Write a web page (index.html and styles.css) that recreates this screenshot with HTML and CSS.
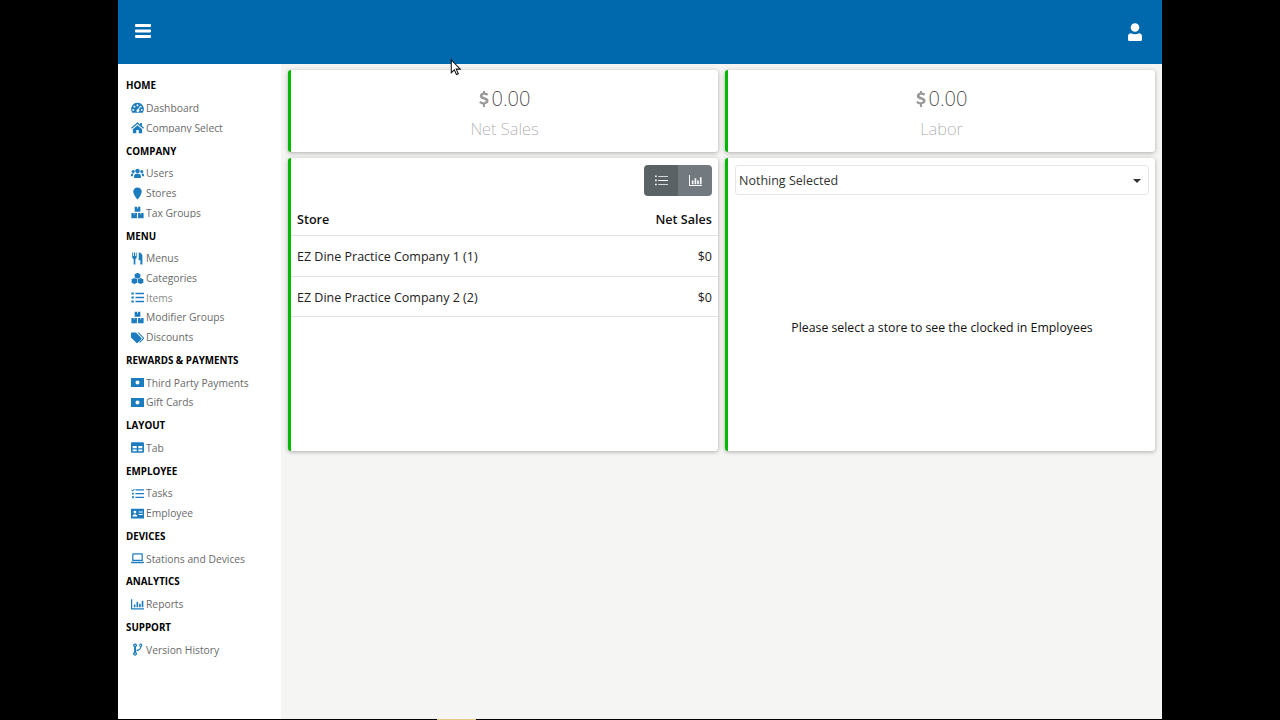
FILE: index.html
```html
<!DOCTYPE html>
<html lang="en">
<head>
<meta charset="utf-8">
<title>Dashboard</title>
<link rel="stylesheet" href="styles.css">
</head>
<body>
<div class="app">
  <header class="topbar">
    <svg class="burger" viewBox="0 0 16 14"><path d="M1 0h14a1 1 0 0 1 1 1v1a1 1 0 0 1-1 1H1a1 1 0 0 1-1-1V1a1 1 0 0 1 1-1zM1 5.500h14a1 1 0 0 1 1 1v1a1 1 0 0 1-1 1H1a1 1 0 0 1-1-1v-1a1 1 0 0 1 1-1zM1 11h14a1 1 0 0 1 1 1v1a1 1 0 0 1-1 1H1a1 1 0 0 1-1-1v-1a1 1 0 0 1 1-1z"/></svg>
    <svg class="user" viewBox="0 0 14 18"><circle cx="7" cy="4.500" r="4.300"/><path d="M3 10.200c1.200.6 2.600 1 4 1s2.800-.4 4-1c1.800 0 3 1.400 3 3V16.500a1.500 1.500 0 0 1-1.500 1.500h-11A1.500 1.500 0 0 1 0 16.500v-3.300c0-1.600 1.200-3 3-3z"/></svg>
  </header>
  <div class="body">
    <nav class="sidebar">
      <section class="group">
        <h2>HOME</h2>
        <a class="item"><svg viewBox="0 0 16 16"><path fill-rule="evenodd" d="M8 1a7.700 7.700 0 0 1 6.800 11.500c-.2.500-.7.800-1.200.8H2.400c-.5 0-1-.3-1.200-.8A7.700 7.700 0 0 1 8 1zM8 2.800a1.200 1.200 0 1 0 0 2.400 1.200 1.200 0 0 0 0-2.400zM4.200 4.500a1.200 1.200 0 1 0 0 2.400 1.200 1.200 0 0 0 0-2.400zm7.600 0a1.200 1.200 0 1 0 0 2.400 1.200 1.200 0 0 0 0-2.400zM2.800 8.500a1.200 1.200 0 1 0 0 2.400 1.200 1.200 0 0 0 0-2.400zm10.400 0a1.200 1.200 0 1 0 0 2.400 1.200 1.200 0 0 0 0-2.400zM10.500 5.500L8.600 9a1.700 1.700 0 1 0 1 .4l2-3.400z"/></svg>Dashboard</a>
        <a class="item clip"><svg viewBox="0 0 16 16"><path d="M8 1.500L0 8.400l1 1.100L8 3.600l7 5.900 1-1.100-2.500-2.200V2.500h-2.200v1.900zM2.300 10.100V15h4.200v-3.800h3V15h4.200v-4.900L8 5.300z"/></svg><span>Company Select</span></a>
      </section>
      <section class="group">
        <h2>COMPANY</h2>
        <a class="item"><svg viewBox="0 0 16 16"><circle cx="8" cy="5" r="2.800"/><circle cx="2.700" cy="5.500" r="1.900"/><circle cx="13.300" cy="5.500" r="1.900"/><path d="M3.800 13.500v-2C3.800 9.500 5.300 8.300 6.500 8.300h3c1.200 0 2.700 1.200 2.700 3.200v2zM0 11.500V9.700c0-1 .7-1.800 1.700-1.800h1.700c-.7.800-1.100 1.900-1.200 3.600zM16 11.500V9.700c0-1-.7-1.800-1.700-1.800h-1.700c.7.800 1.100 1.900 1.200 3.600z"/></svg>Users</a>
        <a class="item"><svg viewBox="0 0 16 16"><path d="M8 .5c3.100 0 5.200 2.200 5.200 5.100C13.200 8.600 10 13.400 8 15.500 6 13.400 2.800 8.600 2.800 5.600 2.800 2.700 4.900.5 8 .5z"/></svg>Stores</a>
        <a class="item clip"><svg viewBox="0 0 16 16"><path fill-rule="evenodd" d="M4.500 1h3v2h1V1h3v6h-7zM.5 8.500h3v2h.8v-2h3V15H.500zM8.700 8.500h3v2h.8v-2h3V15H8.700z"/></svg><span>Tax Groups</span></a>
      </section>
      <section class="group">
        <h2>MENU</h2>
        <a class="item"><svg viewBox="0 0 16 16"><path d="M1.500 .5h1.200v4.500h1V.5h1.200v4.500h1V.5h1.100v6c0 1-.7 1.700-1.600 2V15.500H3.300v-7c-1-.3-1.800-1-1.800-2zM9.500.5c3 0 4.500 2 4.500 5v10h-2.500V10H9.500z"/></svg>Menus</a>
        <a class="item"><svg viewBox="0 0 16 16"><path d="M8 1l3.500 1.700v4L8 8.400 4.500 6.700v-4zM4.200 7.300l3.400 1.700v4.200l-3.400 1.700L.8 13.200V9zM11.800 7.300l3.400 1.700v4.200l-3.400 1.700-3.400-1.700V9z"/></svg>Categories</a>
        <a class="item dim"><svg viewBox="0 0 16 16"><path d="M.5 1.800h3v2.600h-3zM.5 6.700h3v2.600h-3zM.5 11.600h3v2.600h-3zM5.500 2.300H16V4H5.500zM5.500 7.200H16v1.700H5.500zM5.500 12.100H16v1.700H5.500z"/></svg>Items</a>
        <a class="item"><svg viewBox="0 0 16 16"><path fill-rule="evenodd" d="M4.500 1h3v2h1V1h3v6h-7zM.5 8.500h3v2h.8v-2h3V15H.500zM8.700 8.500h3v2h.8v-2h3V15H8.700z"/></svg>Modifier Groups</a>
        <a class="item clip"><svg viewBox="0 0 16 16"><path d="M0 2.700v5.200l6.500 6.500c.6.600 1.300.6 1.900 0l4.200-4.200c.6-.6.600-1.300 0-1.900L6.100 1.800H.9C.4 1.800 0 2.200 0 2.700z"/><path d="M8 1.800h1.800l5.800 6.100c.6.600.6 1.300 0 1.900l-4.500 4.600-.9-.8 4.100-4.300c.3-.3.300-.7 0-1z"/></svg><span>Discounts</span></a>
      </section>
      <section class="group">
        <h2>REWARDS &amp; PAYMENTS</h2>
        <a class="item"><svg viewBox="0 0 16 16"><path fill-rule="evenodd" d="M0 2.500h16v11H0zM8 5.500a2.500 2.500 0 1 0 0 5 2.500 2.500 0 0 0 0-5z"/></svg>Third Party Payments</a>
        <a class="item"><svg viewBox="0 0 16 16"><path fill-rule="evenodd" d="M0 2.500h16v11H0zM8 5.500a2.500 2.500 0 1 0 0 5 2.500 2.500 0 0 0 0-5z"/></svg>Gift Cards</a>
      </section>
      <section class="group">
        <h2>LAYOUT</h2>
        <a class="item"><svg viewBox="0 0 16 16"><path fill-rule="evenodd" d="M1.500 1.500h13A1.500 1.500 0 0 1 16 3v10a1.500 1.500 0 0 1-1.500 1.500h-13A1.500 1.500 0 0 1 0 13V3a1.500 1.500 0 0 1 1.500-1.500zM2 6v3h5V6zm7 0v3h5V6zm-7 4.500v2.200h5v-2.200zm7 0v2.200h5v-2.200z"/></svg>Tab</a>
      </section>
      <section class="group">
        <h2>EMPLOYEE</h2>
        <a class="item"><svg viewBox="0 0 16 16"><path d="M1 3l1 1 2-2 .7.700L2 5.500.3 3.700zM1.200 7h2.300v2.300H1.200zM1.200 11.500h2.300v2.300H1.200zM5.500 2.800H16v1.600H5.500zM5.500 7.400H16V9H5.500zM5.500 12H16v1.600H5.500z"/></svg>Tasks</a>
        <a class="item"><svg viewBox="0 0 16 16"><path fill-rule="evenodd" d="M0 2h16v12H0zM4.800 4.500a1.800 1.800 0 1 0 0 3.600 1.800 1.800 0 0 0 0-3.600zM1.800 11.800h6c0-1.700-1.100-2.900-3-2.900s-3 1.200-3 2.900zM9.500 5.500v1.300H14.500V5.500zm0 3v1.300H14.500V8.500z"/></svg>Employee</a>
      </section>
      <section class="group">
        <h2>DEVICES</h2>
        <a class="item clip"><svg viewBox="0 0 16 16"><path fill-rule="evenodd" d="M2.500 1.500h11c.6 0 1 .4 1 1V11h-13V2.500c0-.6.400-1 1-1zM3 3v6.500h10V3zM0 12h16v.8c0 .6-.4 1-1 1H1c-.6 0-1-.4-1-1z"/></svg><span>Stations and Devices</span></a>
      </section>
      <section class="group">
        <h2>ANALYTICS</h2>
        <a class="item"><svg viewBox="0 0 16 16"><path d="M0 1.500h1.500v11H16V14H0zM3.500 8h2v3.500h-2zM6.800 5h2v6.500h-2zM10 7h2v4.500h-2zM13.200 3.500h2v8h-2z"/></svg>Reports</a>
      </section>
      <section class="group">
        <h2>SUPPORT</h2>
        <a class="item"><svg viewBox="0 0 16 16"><path fill-rule="evenodd" d="M5 .5a2.300 2.300 0 0 1 1.200 4.300v6.400a2.300 2.300 0 1 1-2.400 0V4.800A2.300 2.300 0 0 1 5 .5zm0 1.500a.8.800 0 1 0 0 1.600.8.800 0 0 0 0-1.600zm0 10.500a.8.800 0 1 0 0 1.600.8.800 0 0 0 0-1.600zM11.500.5a2.300 2.300 0 0 1 1.200 4.300c0 3-2.700 4.300-5.900 5.300V8.400c2.500-.7 4.300-1.400 4.600-3.600a2.300 2.300 0 0 1 .1-4.300zm0 1.500a.8.800 0 1 0 0 1.600.8.800 0 0 0 0-1.600z"/></svg>Version History</a>
      </section>
    </nav>
    <main class="content">
      <article class="card kpi">
        <div class="kpi-value"><svg class="dollar" viewBox="0 0 10 18"><path d="M6 1v1.500c1.300.1 2.400.6 3.300 1.300L8 5.700C7.200 5.100 6.200 4.800 5.200 4.800c-1 0-1.600.4-1.600 1 0 .7.800 1 2.100 1.400 2 .6 3.900 1.300 3.900 3.500 0 1.800-1.400 3-3.600 3.300V17H4v-2.500c-1.500-.2-2.900-.8-3.900-1.700l1.500-1.900c1 .8 2.200 1.300 3.400 1.300 1.100 0 1.800-.4 1.800-1.100S6 9.900 4.600 9.500C2.500 8.900.8 8.200.8 6c0-1.800 1.300-3.100 3.200-3.500V1z"/></svg><span>0.00</span></div>
        <div class="kpi-label">Net Sales</div>
      </article>
      <article class="card kpi">
        <div class="kpi-value"><svg class="dollar" viewBox="0 0 10 18"><path d="M6 1v1.500c1.300.1 2.400.6 3.300 1.300L8 5.700C7.200 5.100 6.200 4.800 5.200 4.800c-1 0-1.600.4-1.600 1 0 .7.800 1 2.100 1.400 2 .6 3.900 1.300 3.900 3.500 0 1.800-1.400 3-3.600 3.300V17H4v-2.500c-1.500-.2-2.900-.8-3.900-1.700l1.500-1.900c1 .8 2.200 1.300 3.400 1.300 1.100 0 1.800-.4 1.800-1.100S6 9.900 4.600 9.500C2.500 8.900.8 8.200.8 6c0-1.800 1.300-3.100 3.200-3.500V1z"/></svg><span>0.00</span></div>
        <div class="kpi-label">Labor</div>
      </article>
      <article class="card stores">
        <div class="toolbar">
          <div class="btn-group">
            <button class="btn active"><svg viewBox="0 0 14 12"><path d="M0 .5h1.800v1.800H0zM0 5h1.800v1.800H0zM0 9.500h1.800v1.800H0zM3.500 1H14v1H3.500zM3.500 5.500H14v1H3.500zM3.500 10H14v1H3.500z"/></svg></button>
            <button class="btn"><svg viewBox="0 0 14 12"><path d="M0 0h1v11h13v1H0zM3 6h1.800v4H3zM6 3.500h1.800V10H6zM8.800 6h1.800v4H8.800zM11.800 2.500h1.800V10h-1.800z"/></svg></button>
          </div>
        </div>
        <table class="store-table">
          <thead><tr><th>Store</th><th class="num">Net Sales</th></tr></thead>
          <tbody>
            <tr class="row-a"><td>EZ Dine Practice Company 1 (1)</td><td class="num">$0</td></tr>
            <tr class="row-b"><td>EZ Dine Practice Company 2 (2)</td><td class="num">$0</td></tr>
          </tbody>
        </table>
      </article>
      <article class="card employees">
        <div class="select"><span>Nothing Selected</span><i class="caret"></i></div>
        <p class="empty">Please select a store to see the clocked in Employees</p>
      </article>
    </main>
  </div>
</div>
<svg class="cursor" viewBox="0 0 12 18"><path d="M1 1v13.500l3.200-3 2.300 5 2-.9-2.300-4.900h4.300z" fill="#fff" stroke="#111" stroke-width="1.100"/></svg>
<div class="taskbar-sliver"></div>
</body>
</html>
```
FILE: styles.css
```css
* { box-sizing: border-box; }
html, body { margin: 0; height: 100%; background: #000; overflow: hidden; }
body { font-family: "Open Sans", "Noto Sans", sans-serif; color: #111; }

.app { width: 1044px; height: 719px; margin-left: 118px; display: flex; flex-direction: column; background: #f5f5f4; }

.topbar { height: 64px; flex: none; background: #0069ae; display: flex; align-items: center; justify-content: space-between; padding: 0 20px 0 17px; }
.burger { width: 16px; height: 14px; fill: #fff; margin-top: -3px; }
.user { width: 14px; height: 18px; fill: #fff; margin-top: -1px; }

.body { flex: 1; display: flex; min-height: 0; }

.sidebar { width: 163px; flex: none; background: #fff; padding-top: 11.4px; }
.group { padding-bottom: 2.85px; }
.group h2 { margin: 0 0 2px 8px; padding-top: 1px; font-size: 9.8px; line-height: 20px; font-weight: 700; color: #000; white-space: nowrap; }
.item { display: flex; align-items: center; height: 19.7px; padding-left: 13px; font-size: 10.3px; color: #6a6a6a; white-space: nowrap; }
.item svg { width: 13px; height: 13px; flex: none; margin-right: 2.500px; margin-left: -.5px; fill: #1c7cc0; }
.item.clip span { align-self: flex-start; height: 15px; line-height: 20.5px; overflow: hidden; }
.item.dim { color: #8a8a8a; }

.content { flex: 1; display: grid; grid-template-columns: 430px 430px; grid-template-rows: 82px 293px; column-gap: 7px; row-gap: 6px; padding: 6px 7px 0; align-content: start; }

.card { background: #fff; border-left: 3px solid #00b800; border-radius: 3px; box-shadow: 0 1px 4px rgba(0, 0, 0, .3); }

.kpi { display: flex; flex-direction: column; align-items: center; padding-top: 15px; }
.kpi-value { display: flex; align-items: center; font-size: 20px; line-height: 28px; font-weight: 200; color: #333; font-family: "Noto Sans", sans-serif; }
.dollar { width: 10px; height: 18px; fill: #999; margin-right: 3px; }
.kpi-label { font-size: 16.5px; line-height: 24px; font-weight: 200; color: #aaa; margin-top: 4px; font-family: "Noto Sans", sans-serif; }

.stores { display: flex; flex-direction: column; }
.toolbar { display: flex; justify-content: flex-end; padding: 7px 6px 0 0; }
.btn-group { display: flex; border-radius: 4px; overflow: hidden; }
.btn { width: 34px; height: 31px; border: 0; padding: 0; background: #727a80; display: flex; align-items: center; justify-content: center; }
.btn.active { background: #5b6266; }
.btn svg { width: 13px; height: 11px; fill: #fff; }

.store-table { width: 100%; border-collapse: collapse; font-size: 12.5px; margin-top: 7px; }
.store-table th { height: 32px; text-align: left; font-weight: 600; color: #111; padding: 2px 6px 0; border-bottom: 1px solid #dee2e6; font-size: 12.6px; }
.store-table td { padding: 2px 6px 0; border-bottom: 1px solid #dee2e6; color: #222; }
.row-a td { height: 41px; }
.row-b td { height: 40px; }
.store-table .num { text-align: right; }

.employees { display: flex; flex-direction: column; padding: 7px 6px 0 7px; }
.select { height: 30px; flex: none; border: 1px solid #e6e6e6; border-radius: 3px; display: flex; align-items: center; justify-content: space-between; padding: 1px 7px 0 3px; font-size: 12.5px; color: #333; }
.caret { width: 0; height: 0; border-left: 4.500px solid transparent; border-right: 4.500px solid transparent; border-top: 4.500px solid #333; }
.empty { margin: 124px 0 0; text-align: center; font-size: 12.3px; line-height: 18px; color: #111; }

.cursor { position: absolute; left: 450px; top: 59px; width: 12px; height: 17px; }
.taskbar-sliver { position: absolute; left: 437px; top: 719px; width: 39px; height: 1px; background: #e8c987; }
```
